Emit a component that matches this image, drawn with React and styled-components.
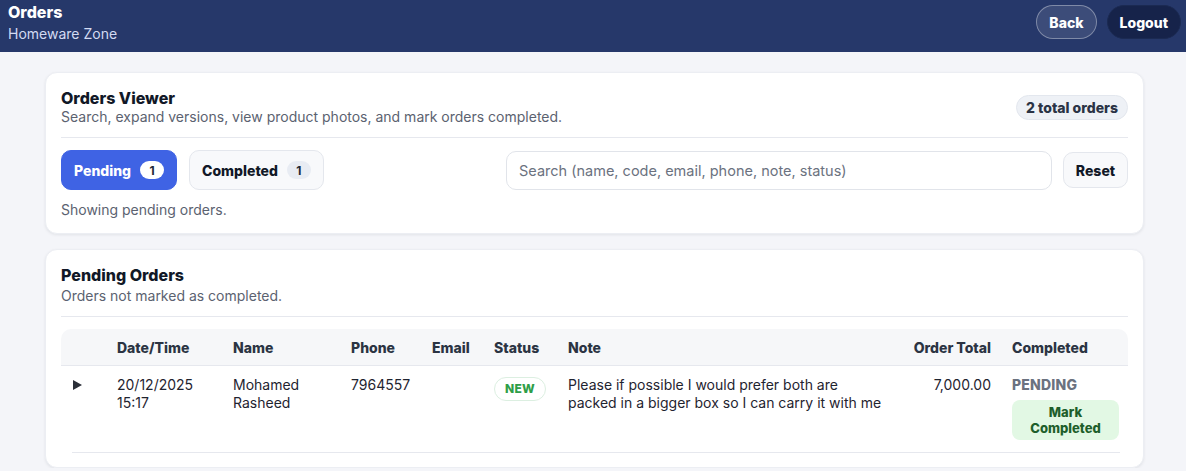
import React from 'react';
import styled, { createGlobalStyle } from 'styled-components';

const GlobalStyle = createGlobalStyle`
  * { box-sizing: border-box; }
  body {
    margin: 0;
    background: #f4f5f9;
    font-family: Inter, "Liberation Sans", Arial, sans-serif;
    color: #111827;
  }
`;

const TopBar = styled.header`
  height: 52px;
  background: #26386a;
  display: flex;
  align-items: center;
  justify-content: space-between;
  padding: 0 5px 0 8px;
`;

const Brand = styled.div`
  display: flex;
  flex-direction: column;
  margin-top: -8px;
`;

const BrandTitle = styled.div`
  color: #fff;
  font-weight: 800;
  font-size: 16px;
  line-height: 20px;
`;

const BrandSub = styled.div`
  color: #d3dbf2;
  font-size: 14px;
  line-height: 18px;
  margin-top: 3px;
`;

const Actions = styled.div`
  display: flex;
  gap: 10px;
  margin-top: -8px;
`;

const PillButton = styled.button`
  height: 34px;
  padding: 0 12px;
  border-radius: 17px;
  font-family: inherit;
  font-weight: 800;
  font-size: 14px;
  color: #fff;
  border: 1px solid ${p => (p.$dark ? '#1b2a52' : 'rgba(255,255,255,0.35)')};
  background: ${p => (p.$dark ? '#16234a' : 'rgba(255,255,255,0.1)')};
`;

const Main = styled.main`
  padding: 20px 42px 0 45px;
  display: flex;
  flex-direction: column;
  gap: 15px;
`;

const Card = styled.section`
  background: #fff;
  border-radius: 12px;
  box-shadow: 0 1px 3px rgba(16, 24, 40, 0.08);
  border: 1px solid #eceef3;
  padding: 15px 15px 14px;
`;

const CardHead = styled.div`
  display: flex;
  align-items: center;
  justify-content: space-between;
`;

const Title = styled.h2`
  margin: 0;
  font-size: 16px;
  line-height: 20px;
  font-weight: 800;
  color: #111827;
`;

const Sub = styled.p`
  margin: ${p => p.$m || '0'};
  font-size: 14px;
  line-height: 18px;
  color: #5b6270;
`;

const CountBadge = styled.span`
  height: 25px;
  padding: 0 9px;
  display: inline-flex;
  align-items: center;
  border-radius: 13px;
  background: #eef1f6;
  border: 1px solid #e3e7ee;
  font-size: 14px;
  font-weight: 800;
  color: #2a3345;
`;

const Divider = styled.hr`
  border: 0;
  border-top: 1px solid #e6e8ee;
  margin: ${p => p.$m || '11px 0 0'};
`;

const ToolRow = styled.div`
  display: flex;
  align-items: center;
  justify-content: space-between;
  margin-top: 12px;
`;

const Tabs = styled.div`
  display: flex;
  gap: 12px;
`;

const Tab = styled.button`
  height: 40px;
  padding: 0 12px;
  border-radius: 10px;
  display: inline-flex;
  align-items: center;
  gap: 9px;
  font-family: inherit;
  font-size: 14px;
  font-weight: 800;
  border: 1px solid ${p => (p.$active ? '#3f63e4' : '#e4e7ed')};
  background: ${p => (p.$active ? '#3f63e4' : '#f8f9fb')};
  color: ${p => (p.$active ? '#fff' : '#111827')};
`;

const TabCount = styled.span`
  min-width: 24px;
  height: 18px;
  border-radius: 9px;
  display: inline-flex;
  align-items: center;
  justify-content: center;
  font-size: 12px;
  font-weight: 700;
  background: ${p => (p.$active ? '#fff' : '#e8ecf3')};
  color: #1f2937;
`;

const SearchGroup = styled.div`
  display: flex;
  align-items: center;
  gap: 11px;
`;

const SearchInput = styled.input`
  width: 546px;
  height: 39px;
  border: 1px solid #e1e4ea;
  border-radius: 10px;
  padding: 0 12px;
  font-family: inherit;
  font-size: 14.5px;
  color: #111827;
  &::placeholder { color: #6b7280; }
  &:focus { outline: none; }
`;

const ResetButton = styled.button`
  height: 36px;
  width: 65px;
  border-radius: 10px;
  border: 1px solid #e4e7ed;
  background: #f8f9fb;
  font-family: inherit;
  font-size: 14px;
  font-weight: 800;
  color: #111827;
`;

const Table = styled.div`
  margin-top: 12px;
  border-radius: 10px;
`;

const cols = '56px 116px 118px 81px 62px 74px 1fr 105px 116px';

const HeadRow = styled.div`
  display: grid;
  grid-template-columns: ${cols};
  height: 37px;
  align-items: center;
  background: #f6f7f9;
  border-bottom: 1px solid #e6e8ee;
  border-radius: 10px 10px 0 0;
`;

const HeadCell = styled.div`
  font-size: 14px;
  font-weight: 800;
  color: #2b3443;
  white-space: nowrap;
  text-align: ${p => p.$align || 'left'};
  padding-right: ${p => (p.$align === 'right' ? '21px' : '0')};
`;

const Row = styled.div`
  display: grid;
  grid-template-columns: ${cols};
  align-items: start;
  padding: 10px 0 12px;
  min-height: 86px;
`;

const Cell = styled.div`
  font-size: 14px;
  line-height: 18px;
  color: #1f2430;
  text-align: ${p => p.$align || 'left'};
  padding-right: ${p => (p.$align === 'right' ? '21px' : '0')};
`;

const Caret = styled.span`
  display: block;
  margin: 4px 0 0 12px;
  width: 0;
  height: 0;
  border-top: 5px solid transparent;
  border-bottom: 5px solid transparent;
  border-left: 9px solid #2b2f38;
`;

const StatusPill = styled.span`
  display: inline-flex;
  align-items: center;
  height: 24px;
  margin-top: 1px;
  padding: 0 10px;
  border-radius: 12px;
  border: 1px solid #dcefe1;
  font-size: 12px;
  font-weight: 800;
  letter-spacing: 0.3px;
  color: #2f9e48;
`;

const CompletedCell = styled.div`
  display: flex;
  flex-direction: column;
  align-items: flex-start;
  gap: 6px;
`;

const PendingLabel = styled.span`
  font-size: 14px;
  line-height: 18px;
  font-weight: 800;
  color: #6b7280;
  letter-spacing: 0.2px;
`;

const MarkButton = styled.button`
  width: 107px;
  padding: 4px 8px;
  border: 0;
  border-radius: 8px;
  background: #e2f8e4;
  color: #1e5f2b;
  font-family: inherit;
  font-size: 13px;
  font-weight: 800;
  line-height: 16px;
`;

export default function App() {
  return (
    <>
      <GlobalStyle />
      <TopBar>
        <Brand>
          <BrandTitle>Orders</BrandTitle>
          <BrandSub>Homeware Zone</BrandSub>
        </Brand>
        <Actions>
          <PillButton>Back</PillButton>
          <PillButton $dark>Logout</PillButton>
        </Actions>
      </TopBar>

      <Main>
        <Card>
          <CardHead>
            <div>
              <Title>Orders Viewer</Title>
              <Sub>Search, expand versions, view product photos, and mark orders completed.</Sub>
            </div>
            <CountBadge>2 total orders</CountBadge>
          </CardHead>
          <Divider />
          <ToolRow>
            <Tabs>
              <Tab $active>
                Pending <TabCount $active>1</TabCount>
              </Tab>
              <Tab>
                Completed <TabCount>1</TabCount>
              </Tab>
            </Tabs>
            <SearchGroup>
              <SearchInput placeholder="Search (name, code, email, phone, note, status)" />
              <ResetButton>Reset</ResetButton>
            </SearchGroup>
          </ToolRow>
          <Sub $m="11px 0 0">Showing pending orders.</Sub>
        </Card>

        <Card>
          <Title>Pending Orders</Title>
          <Sub $m="2px 0 0">Orders not marked as completed.</Sub>
          <Divider />
          <Table>
            <HeadRow>
              <HeadCell />
              <HeadCell>Date/Time</HeadCell>
              <HeadCell>Name</HeadCell>
              <HeadCell>Phone</HeadCell>
              <HeadCell>Email</HeadCell>
              <HeadCell>Status</HeadCell>
              <HeadCell>Note</HeadCell>
              <HeadCell $align="right">Order Total</HeadCell>
              <HeadCell>Completed</HeadCell>
            </HeadRow>
            <Row>
              <Cell><Caret /></Cell>
              <Cell>20/12/2025<br />15:17</Cell>
              <Cell>Mohamed<br />Rasheed</Cell>
              <Cell>7964557</Cell>
              <Cell />
              <Cell><StatusPill>NEW</StatusPill></Cell>
              <Cell>Please if possible I would prefer both are<br />packed in a bigger box so I can carry it with me</Cell>
              <Cell $align="right">7,000.00</Cell>
              <CompletedCell>
                <PendingLabel>PENDING</PendingLabel>
                <MarkButton>Mark<br />Completed</MarkButton>
              </CompletedCell>
            </Row>
            <Divider $m="0 8px 0 11px" />
          </Table>
        </Card>
      </Main>
    </>
  );
}
